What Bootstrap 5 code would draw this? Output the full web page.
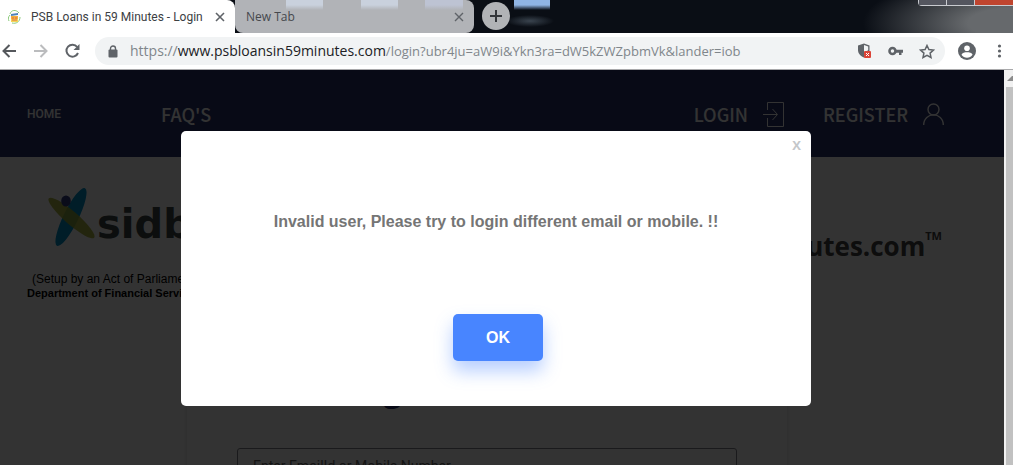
<!DOCTYPE html>
<html lang="en">
<head>
<meta charset="utf-8">
<meta name="viewport" content="width=device-width, initial-scale=1">
<title>PSB Loans in 59 Minutes - Login</title>
<link href="https://cdn.jsdelivr.net/npm/bootstrap@5.3.0/dist/css/bootstrap.min.css" rel="stylesheet">
<style>
  body { font-family: "Liberation Sans", Arial, sans-serif; }
  svg { display: block; flex: none; }

  /* browser frame */
  .chrome-ui { font-family: "Open Sans", "Noto Sans", sans-serif; color: #3c4043; }
  .tab-strip {
    height: 33px;
    background:
      linear-gradient(#8fb4e4 50%, transparent) 514px 0 / 36px 10px no-repeat,
      radial-gradient(ellipse 24px 6px at 530px 21px, #3a444f, transparent),
      radial-gradient(ellipse 150px 50px at 100% 70%, #66696c 30%, transparent),
      #0a0e15;
  }
  .tab-item { height: 33px; font-size: 12px; line-height: 16px; color: #3c4043; }
  .tab-front { width: 235px; background: #fff; padding: 0 10px 0 8px; border-radius: 0 8px 0 0; font-family: Roboto, sans-serif; }
  .tab-front span { margin-left: 10px; }
  .tab-back {
    width: 239px; padding: 0 10px 0 11px; border-radius: 0 8px 8px 8px; color: #45484d;
    background:
      linear-gradient(#c9d1dd 50%, transparent) 51px 0 / 37px 10px no-repeat,
      linear-gradient(#c9d1dd 50%, transparent) 126px 0 / 37px 10px no-repeat,
      linear-gradient(#bdc3d3 50%, transparent) 190px 0 / 38px 10px no-repeat,
      #b1b3b7;
  }
  .icon-btn { border: 0; background: none; padding: 0; color: #5f6368; }
  .new-tab { width: 28px; height: 28px; background: #b1b3b6; color: #33363a; border-radius: 50%; margin: 2px 0 0 8px; }
  .window-keys { height: 6px; width: 95px; border: 1px solid #c9cbd0; border-top: 0; border-right: 0; border-radius: 0 0 0 4px; }
  .window-keys span { background: #54565f; border-right: 1px solid #c9cbd0; width: 28px; }
  .window-keys span:last-child { background: #c0452f; flex: 1; border: 0; }
  .tool-row { height: 37px; background: #fff; border-bottom: 1px solid #a9a9ab; padding: 0 6px 0 2px; }
  .url-pill { height: 28px; background: #f1f3f4; border-radius: 14px; margin: 0 13px 0 14px; padding: 0 10px 0 13px; font-size: 14px; line-height: 20px; color: #80868b; }
  .url-pill b { font-weight: 400; color: #202124; }
  .url-path { font-size: 13px; }

  /* site */
  .site-view { background: #fff; }
  .site-nav { height: 87px; background: #28326e; padding: 0 60px 0 27px; font-family: "Noto Sans CJK SC", sans-serif; }
  .site-nav a { color: #fff; text-decoration: none; font-size: 18px; font-weight: 500; line-height: 24px; }
  .site-nav a.home-link { font: 500 12px/16px Roboto, sans-serif; margin-right: 100px; }
  .nav-gap { gap: 39px; }
  .nav-gap a { gap: 15px; }
  .sidbi-word { font: bold 40px/44px "DejaVu Sans", sans-serif; color: #3c4646; }
  .sidbi-note { font-size: 11px; line-height: 14px; color: #000; }
  .sidbi-note span { font-size: 12px; padding-left: 5px; }
  .brand-word { font: bold 26px/32px "Open Sans", sans-serif; color: #404040; padding: 44px 62px 0 0; }
  .brand-word small { font-size: 11px; line-height: 12px; font-weight: 700; }
  .logo-row { padding: 29px 0 0 27px; height: 190px; }
  .login-panel { width: 600px; margin-left: 187px; padding: 23px 50px; height: 200px; box-shadow: 0 0 4px rgba(0,0,0,.15); }
  .login-panel h1 { font: bold 32px/38px "Open Sans", sans-serif; color: #28326e; margin: 0 0 40px; }
  .login-panel .form-control { height: 36px; padding: 0 15px; font: 14px/20px Roboto, sans-serif; border: 1px solid #82828c; border-radius: 3px; }
  .login-panel .form-control::placeholder { color: #666; }
  .scroll-lane { width: 9px; background: #f1f1f1; padding-left: 2px; }
  .scroll-lane svg { margin: 6px 0 5px 1px; }
  .scroll-grip { background: #c1c1c1; }

  /* message box */
  .page-shade { background: rgba(0,0,0,.8); padding: 61px 12px 0 0; }
  .alert-box { width: 630px; height: 275px; background: #fff; border-radius: 5px; color: #757575; }
  .alert-box p { font-size: 16px; line-height: 24px; font-weight: 700; margin: 79px 0 80px; }
  .alert-close { top: 6px; right: 10px; font: bold 13px/16px "Open Sans", sans-serif; color: #c4c7ca; }
  .ok-btn { width: 90px; height: 47px; margin-left: 4px; border-radius: 5px; background: #4885ff; color: #fff; font-size: 16px; font-weight: 700; box-shadow: 0 10px 18px rgba(72,133,255,.4); }
  .ok-btn:hover { background: #3877f5; color: #fff; }
</style>
</head>
<body class="vh-100 overflow-hidden d-flex flex-column">

<header class="chrome-ui flex-shrink-0">
  <div class="tab-strip d-flex">
    <div class="tab-item tab-front d-flex align-items-center">
      <svg width="13" height="16" viewBox="0 0 13 16" fill="none"><path d="M2 5C3 1 8 0 11 4M12 8c0 5-4 7-8 6M1 12C0 10 0 8 2 6" stroke="#8ccb7c"/><path d="M3 5l7-1v2l-7 1z" fill="#4d83b9"/><path d="M3 7h7v3H3z" fill="#f4b13a"/><path d="M3 10h7v3H3z" fill="#f5d657"/><path d="M4 9h2M7 9h2M4 11h5" stroke="#dd6a45"/></svg>
      <span class="text-nowrap">PSB Loans in 59 Minutes - Login</span>
      <button class="icon-btn ms-auto" aria-label="Close tab"><svg width="10" height="10" viewBox="0 0 10 10" stroke="currentColor" stroke-width="1.6"><path d="M1 1l8 8M9 1L1 9"/></svg></button>
    </div>
    <div class="tab-item tab-back d-flex align-items-center">
      <span>New Tab</span>
      <button class="icon-btn ms-auto" aria-label="Close tab"><svg width="10" height="10" viewBox="0 0 10 10" stroke="currentColor" stroke-width="1.4"><path d="M1 1l8 8M9 1L1 9"/></svg></button>
    </div>
    <button class="icon-btn new-tab d-flex align-items-center justify-content-center" aria-label="New tab"><svg width="12" height="12" viewBox="0 0 12 12" stroke="currentColor" stroke-width="2"><path d="M6 0v12M0 6h12"/></svg></button>
    <div class="window-keys d-flex ms-auto"><span></span><span></span><span></span></div>
  </div>

  <div class="tool-row d-flex align-items-center">
    <button class="icon-btn" aria-label="Back"><svg width="15" height="14" viewBox="0 0 15 14" fill="none" stroke="#55585c" stroke-width="2"><path d="M14 7H2M7.500 1L1.500 7l6 6"/></svg></button>
    <button class="icon-btn ms-3" aria-label="Forward"><svg width="15" height="14" viewBox="0 0 15 14" fill="none" stroke="#bbbcbe" stroke-width="2"><path d="M1 7h12M7.500 1l6 6-6 6"/></svg></button>
    <button class="icon-btn ms-3" aria-label="Reload"><svg width="17" height="16" viewBox="0 0 17 16"><path d="M13.200 4A6 6 0 1 0 14 10" fill="none" stroke="#5f6368" stroke-width="2"/><path d="M15.500 1v6h-6z" fill="#5f6368"/></svg></button>
    <div class="url-pill flex-grow-1 d-flex align-items-center">
      <svg width="10" height="13" viewBox="0 0 10 13"><path d="M2.500 6V3.500a2.500 2.500 0 0 1 5 0V6" fill="none" stroke="#5f6368" stroke-width="1.400"/><rect x="0.500" y="4.500" width="9" height="8" rx="1" fill="#5f6368"/></svg>
      <span class="text-nowrap ms-2 ps-1">https://<b>www.psbloansin59minutes.com</b><span class="url-path">/login?ubr4ju=aW9i&amp;Ykn3ra=dW5kZWZpbmVk&amp;lander=iob</span></span>
      <svg class="ms-auto" width="15" height="16" viewBox="0 0 15 16"><path d="M7 .5l5.500 2V7c0 3.500-2 6-5.500 7.500C3.500 13 1 10.500 1 7V2.500z" fill="#5f6368"/><path d="M7 2l4.200 1.500V7H7z" fill="#f1f3f4"/><path d="M7 7h4l-4 6z" fill="#f1f3f4"/><rect x="7" y="8" width="7" height="7" rx="1" fill="#db4437"/><path d="M9 10l3 3M12 10l-3 3" stroke="#fff"/></svg>
      <button class="icon-btn ms-3" aria-label="Saved passwords"><svg width="15" height="10" viewBox="0 0 15 10"><circle cx="4.500" cy="5" r="3" fill="none" stroke="#5f6368" stroke-width="2.600"/><path d="M7.500 3.700H15v3h-1.500V9H11V6.700H7.500z" fill="#5f6368"/></svg></button>
      <button class="icon-btn ms-3" aria-label="Bookmark this page"><svg width="16" height="15" viewBox="0 0 16 15"><path d="M8 1.500l1.900 4.100 4.500.5-3.300 3 .9 4.400L8 11.300l-4 2.200.9-4.400-3.300-3 4.500-.5z" fill="none" stroke="#5f6368" stroke-width="1.500"/></svg></button>
    </div>
    <button class="icon-btn" aria-label="Profile"><svg width="18" height="18" viewBox="0 0 18 18"><circle cx="9" cy="9" r="9" fill="#5f6368"/><circle cx="9" cy="6.200" r="2.800" fill="#fff"/><path d="M3.500 12.800C4 10.800 7 10.300 9 10.300s5 .5 5.500 2.500a6.500 6.500 0 0 1-11 0z" fill="#fff"/></svg></button>
    <button class="icon-btn ms-3" aria-label="Menu"><svg width="15" height="14" viewBox="0 0 15 14" fill="#5f6368"><circle cx="7.500" cy="2" r="1.600"/><circle cx="7.500" cy="7" r="1.600"/><circle cx="7.500" cy="12" r="1.600"/></svg></button>
  </div>
</header>

<div class="d-flex flex-grow-1 overflow-hidden">
  <main class="site-view flex-grow-1 position-relative overflow-hidden">
    <nav class="site-nav d-flex align-items-center">
      <a class="home-link" href="#">HOME</a>
      <a href="#">FAQ'S</a>
      <div class="nav-gap d-flex ms-auto">
        <a class="d-flex align-items-center" href="#">LOGIN
          <svg width="21" height="26" viewBox="0 0 21 26" fill="none" stroke="#fff"><path d="M4.500 9V1.500h16v24h-16V17M0 13.500h14M9.500 8l5 5.500-5 5.500"/></svg></a>
        <a class="d-flex align-items-center" href="#">REGISTER
          <svg width="21" height="22" viewBox="0 0 21 22" fill="none" stroke="#fff" stroke-width="1.400"><circle cx="10.500" cy="6.500" r="5.500"/><path d="M.7 22c0-13.500 19.600-13.500 19.600 0"/></svg></a>
      </div>
    </nav>

    <div class="logo-row d-flex justify-content-between">
      <div>
        <div class="d-flex align-items-start ps-3">
          <svg class="ms-1" width="50" height="62" viewBox="0 0 50 62"><ellipse cx="24" cy="31" rx="7.500" ry="32" transform="rotate(26 24 31)" fill="#0090c8"/><ellipse cx="24.500" cy="32" rx="6.500" ry="30" transform="rotate(-49 24.500 32)" fill="#a0aa28" fill-opacity=".85"/><ellipse cx="19" cy="15" rx="4.800" ry="5.600" fill="#323c82"/></svg>
          <span class="sidbi-word mt-3">sidbi</span>
        </div>
        <div class="sidbi-note mt-4"><span>(Setup by an Act of Parliament)</span><br><b>Department of Financial Services</b></div>
      </div>
      <div class="brand-word d-flex align-items-start"><span>psbloansin59minutes.com</span><small>TM</small></div>
    </div>

    <form class="login-panel">
      <h1 class="text-center">Login to Continue</h1>
      <input class="form-control" type="text" aria-label="Email or mobile" placeholder="Enter EmailId or Mobile Number">
    </form>

    <div class="page-shade position-absolute top-0 start-0 w-100 h-100">
      <div class="alert-box position-relative mx-auto d-flex flex-column align-items-center" role="dialog" aria-label="Message">
        <button class="icon-btn alert-close position-absolute" aria-label="Close">X</button>
        <p>Invalid user, Please try to login different email or mobile. !!</p>
        <button class="btn ok-btn">OK</button>
      </div>
    </div>
  </main>
  <div class="scroll-lane d-flex flex-column">
    <svg width="6" height="6" viewBox="0 0 6 6"><path d="M0 5l5-5h1v5z" fill="#8b8b8b"/></svg>
    <div class="scroll-grip flex-grow-1"></div>
  </div>
</div>

<script src="https://cdn.jsdelivr.net/npm/bootstrap@5.3.0/dist/js/bootstrap.bundle.min.js"></script>
</body>
</html>
